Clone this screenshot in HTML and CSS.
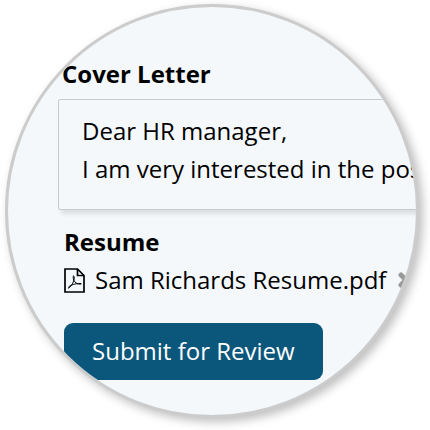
FILE: index.html
```
<!DOCTYPE html>
<html lang="en">
<head>
  <meta charset="UTF-8">
  <meta name="viewport" content="width=device-width, initial-scale=1.0">
  <title>Job Application</title>
  <link rel="stylesheet" href="styles.css">
</head>
<body>
  <main class="lens">
    <form class="application">
      <label class="field-label" for="cover-letter">Cover Letter</label>
      <textarea id="cover-letter" class="cover-letter" wrap="off">Dear HR manager,
I am very interested in the position</textarea>

      <section class="resume">
        <h2>Resume</h2>
        <div class="file">
          <svg class="file-icon" viewBox="0 0 21 25" fill="none" stroke="#000" aria-hidden="true">
            <path stroke-width="1.7" d="M1 1h12.500L20 7.500V24H1z"/>
            <path stroke-width="1.7" d="M13.500 1v6.500H20"/>
            <path stroke-width="1" d="M9.500 7.500c-.8 2.200 0 4.500 1.300 6.300 1.500 1.700 3.500 2.700 6.700 2.200M10.300 8.500c.3 3-1.300 6.500-2.700 8.500-1 1.600-2.100 2.700-3.600 3.300M4.300 19.300c2-2.300 6.500-3.900 12.700-3.800"/>
          </svg>
          <span>Sam Richards Resume.pdf</span>
          <button type="button" class="remove" aria-label="Remove file">
            <svg viewBox="0 0 16 16" stroke="#999" stroke-width="5" stroke-linecap="round" aria-hidden="true">
              <path d="M3 3l10 10M13 3L3 13"/>
            </svg>
          </button>
        </div>
        <button type="submit" class="submit">Submit for Review</button>
      </section>
    </form>
  </main>
</body>
</html>
```
FILE: styles.css
```
* { box-sizing:border-box; }
body { margin:0; padding:4px 11px 12px 5px; background:#fff; color:#000; font-family:"Open Sans",sans-serif; font-size:24px; line-height:38px; }

/* round magnified view of the form */
.lens { aspect-ratio:1; border:3px solid #ccc; border-radius:50%; background:#f4f8fb; box-shadow:4px 4px 10px rgba(0,0,0,.25); overflow:hidden; }
.application { padding:48px 0 0 50px; }

.field-label { display:block; padding-left:4px; font-weight:bold; }
.cover-letter { display:block; width:120%; height:111px; margin-top:6px; padding:12px 23px; border:1px solid #c8cacc; border-radius:2px; background:transparent; color:inherit; font:inherit; box-shadow:3px 4px 4px rgba(0,0,0,.1); resize:none; overflow:hidden; }

.resume { padding:13px 0 0 6px; }
h2 { margin:0; font-size:24px; line-height:38px; }
.file { display:flex; align-items:center; white-space:nowrap; }
.file-icon { width:21px; height:25px; margin-right:10px; flex:none; }

button { border:none; color:#fff; font:inherit; cursor:pointer; }
.remove { display:flex; flex:none; margin-left:12px; padding:0; background:none; }
.remove svg { width:16px; height:16px; }
.submit { display:block; margin-top:24px; padding:9px 28px 10px; border-radius:9px; background:#0b567b; }
```
